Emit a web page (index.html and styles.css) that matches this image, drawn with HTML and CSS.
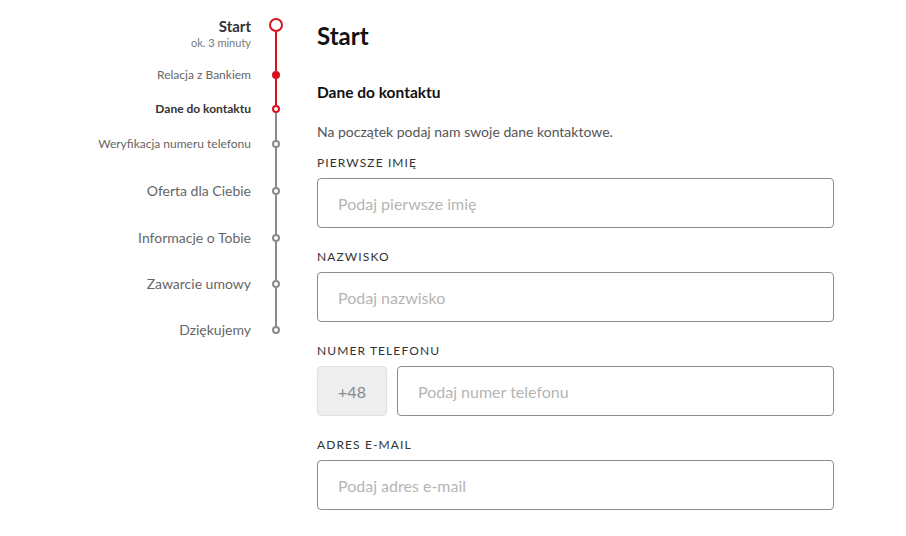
FILE: index.html
```html
<!DOCTYPE html>
<html lang="pl">
<head>
<meta charset="utf-8">
<title>Start</title>
<link rel="stylesheet" href="styles.css">
</head>
<body>
<div class="page">
  <nav class="stepper">
    <div class="step step-start">
      <div class="step-label">
        <div class="step-title">Start</div>
        <div class="step-sub">ok. 3 minuty</div>
      </div>
      <div class="marker">
        <span class="seg seg-top seg-none"></span>
        <span class="dot dot-big"></span>
        <span class="seg seg-bottom seg-red"></span>
      </div>
    </div>
    <div class="step step-h34">
      <div class="step-label small">Relacja z Bankiem</div>
      <div class="marker">
        <span class="seg seg-top seg-red"></span>
        <span class="dot dot-filled"></span>
        <span class="seg seg-bottom seg-red"></span>
      </div>
    </div>
    <div class="step step-h35">
      <div class="step-label small bold">Dane do kontaktu</div>
      <div class="marker">
        <span class="seg seg-top seg-red"></span>
        <span class="dot dot-red"></span>
        <span class="seg seg-bottom seg-gray"></span>
      </div>
    </div>
    <div class="step step-h47">
      <div class="step-label small">Weryfikacja numeru telefonu</div>
      <div class="marker">
        <span class="seg seg-top seg-gray"></span>
        <span class="dot dot-gray"></span>
        <span class="seg seg-bottom seg-gray"></span>
      </div>
    </div>
    <div class="step step-h47">
      <div class="step-label">Oferta dla Ciebie</div>
      <div class="marker">
        <span class="seg seg-top seg-gray"></span>
        <span class="dot dot-gray"></span>
        <span class="seg seg-bottom seg-gray"></span>
      </div>
    </div>
    <div class="step step-h46">
      <div class="step-label">Informacje o Tobie</div>
      <div class="marker">
        <span class="seg seg-top seg-gray"></span>
        <span class="dot dot-gray"></span>
        <span class="seg seg-bottom seg-gray"></span>
      </div>
    </div>
    <div class="step step-h46">
      <div class="step-label">Zawarcie umowy</div>
      <div class="marker">
        <span class="seg seg-top seg-gray"></span>
        <span class="dot dot-gray"></span>
        <span class="seg seg-bottom seg-gray"></span>
      </div>
    </div>
    <div class="step step-last">
      <div class="step-label">Dziękujemy</div>
      <div class="marker">
        <span class="seg seg-top seg-gray"></span>
        <span class="dot dot-gray"></span>
        <span class="seg seg-bottom seg-none"></span>
      </div>
    </div>
  </nav>

  <main class="content">
    <h1 class="title">Start</h1>
    <h2 class="section-title">Dane do kontaktu</h2>
    <p class="intro">Na początek podaj nam swoje dane kontaktowe.</p>

    <div class="field">
      <label class="field-label" for="fname">Pierwsze imię</label>
      <input class="input" id="fname" type="text" placeholder="Podaj pierwsze imię">
    </div>
    <div class="field">
      <label class="field-label" for="lname">Nazwisko</label>
      <input class="input" id="lname" type="text" placeholder="Podaj nazwisko">
    </div>
    <div class="field">
      <label class="field-label" for="phone">Numer telefonu</label>
      <div class="phone-row">
        <div class="prefix">+48</div>
        <input class="input input-phone" id="phone" type="text" placeholder="Podaj numer telefonu">
      </div>
    </div>
    <div class="field">
      <label class="field-label" for="email">Adres e-mail</label>
      <input class="input" id="email" type="text" placeholder="Podaj adres e-mail">
    </div>
  </main>
</div>
</body>
</html>
```
FILE: styles.css
```css
* { box-sizing: border-box; }

html, body {
  margin: 0;
  padding: 0;
  background: #ffffff;
}

body {
  font-family: Lato, "Open Sans", "Liberation Sans", sans-serif;
  color: #333333;
}

.page {
  display: flex;
  align-items: flex-start;
  padding-left: 40px;
}

/* ---------- stepper ---------- */
.stepper {
  display: flex;
  flex-direction: column;
  padding-top: 16px;
  width: 243px;
}

.step {
  display: flex;
  align-items: stretch;
  gap: 18px;
}

.step-start { height: 49px; }
.step-h34 { height: 34px; }
.step-h35 { height: 35px; }
.step-h47 { height: 47px; }
.step-h46 { height: 46px; }
.step-last { height: 20px; }

.step-label {
  width: 211px;
  text-align: right;
  font-size: 14px;
  line-height: 20px;
  color: #666666;
  white-space: nowrap;
}

.step-label.small { font-size: 12px; }
.step-label.bold { font-weight: 700; color: #333333; }

.step-title {
  font-size: 15px;
  font-weight: 700;
  line-height: 20px;
  color: #333333;
}

.step-sub {
  font-size: 11px;
  line-height: 14px;
  color: #777777;
}

.marker {
  width: 14px;
  display: flex;
  flex-direction: column;
  align-items: center;
}

.seg {
  width: 2px;
  display: block;
}

.seg-bottom { flex: 1; }
.seg-red { background: #d8101c; }
.seg-gray { background: #8a8a8a; }
.seg-none { background: transparent; }

.dot {
  display: block;
  border-radius: 50%;
  background: #ffffff;
  flex: none;
}

.dot-big {
  width: 14px;
  height: 14px;
  border: 2px solid #d8101c;
}
.step-start .seg-top { height: 2px; }

.dot-filled {
  width: 8px;
  height: 8px;
  background: #d8101c;
}
.dot-red {
  width: 8px;
  height: 8px;
  border: 2px solid #d8101c;
}
.dot-gray {
  width: 8px;
  height: 8px;
  border: 2px solid #8a8a8a;
}
.step-h34 .seg-top,
.step-h35 .seg-top,
.step-h47 .seg-top,
.step-h46 .seg-top,
.step-last .seg-top { height: 6px; }

/* ---------- content ---------- */
.content {
  margin-left: 34px;
  padding-top: 21px;
  width: 517px;
}

.title {
  margin: 0;
  font-size: 24px;
  line-height: 30px;
  font-weight: 700;
  color: #111111;
}

.section-title {
  margin: 31px 0 0;
  font-size: 15.5px;
  line-height: 20px;
  font-weight: 700;
  color: #111111;
}

.intro {
  margin: 20px 0 0;
  font-size: 14px;
  line-height: 20px;
  color: #555555;
}

.field {
  display: flex;
  flex-direction: column;
  gap: 7px;
  margin-top: 13px;
}
.field + .field { margin-top: 21px; }

.field-label {
  font-size: 12px;
  line-height: 16px;
  letter-spacing: 1.1px;
  text-transform: uppercase;
  color: #333333;
}

.input {
  width: 100%;
  height: 50px;
  border: 1px solid #8c8c8c;
  border-radius: 4px;
  padding: 0 20px;
  font-family: Lato, "Open Sans", "Liberation Sans", sans-serif;
  font-size: 16px;
  color: #333333;
  background: #ffffff;
  outline: none;
}
.input::placeholder { color: #b5b5b5; }

.phone-row {
  display: flex;
  gap: 10px;
}

.prefix {
  width: 70px;
  height: 50px;
  flex: none;
  display: flex;
  align-items: center;
  justify-content: center;
  background: #eeeeee;
  border: 1px solid #e0e0e0;
  border-radius: 4px;
  font-size: 16px;
  color: #888888;
}

.input-phone { flex: 1; width: auto; }
```
